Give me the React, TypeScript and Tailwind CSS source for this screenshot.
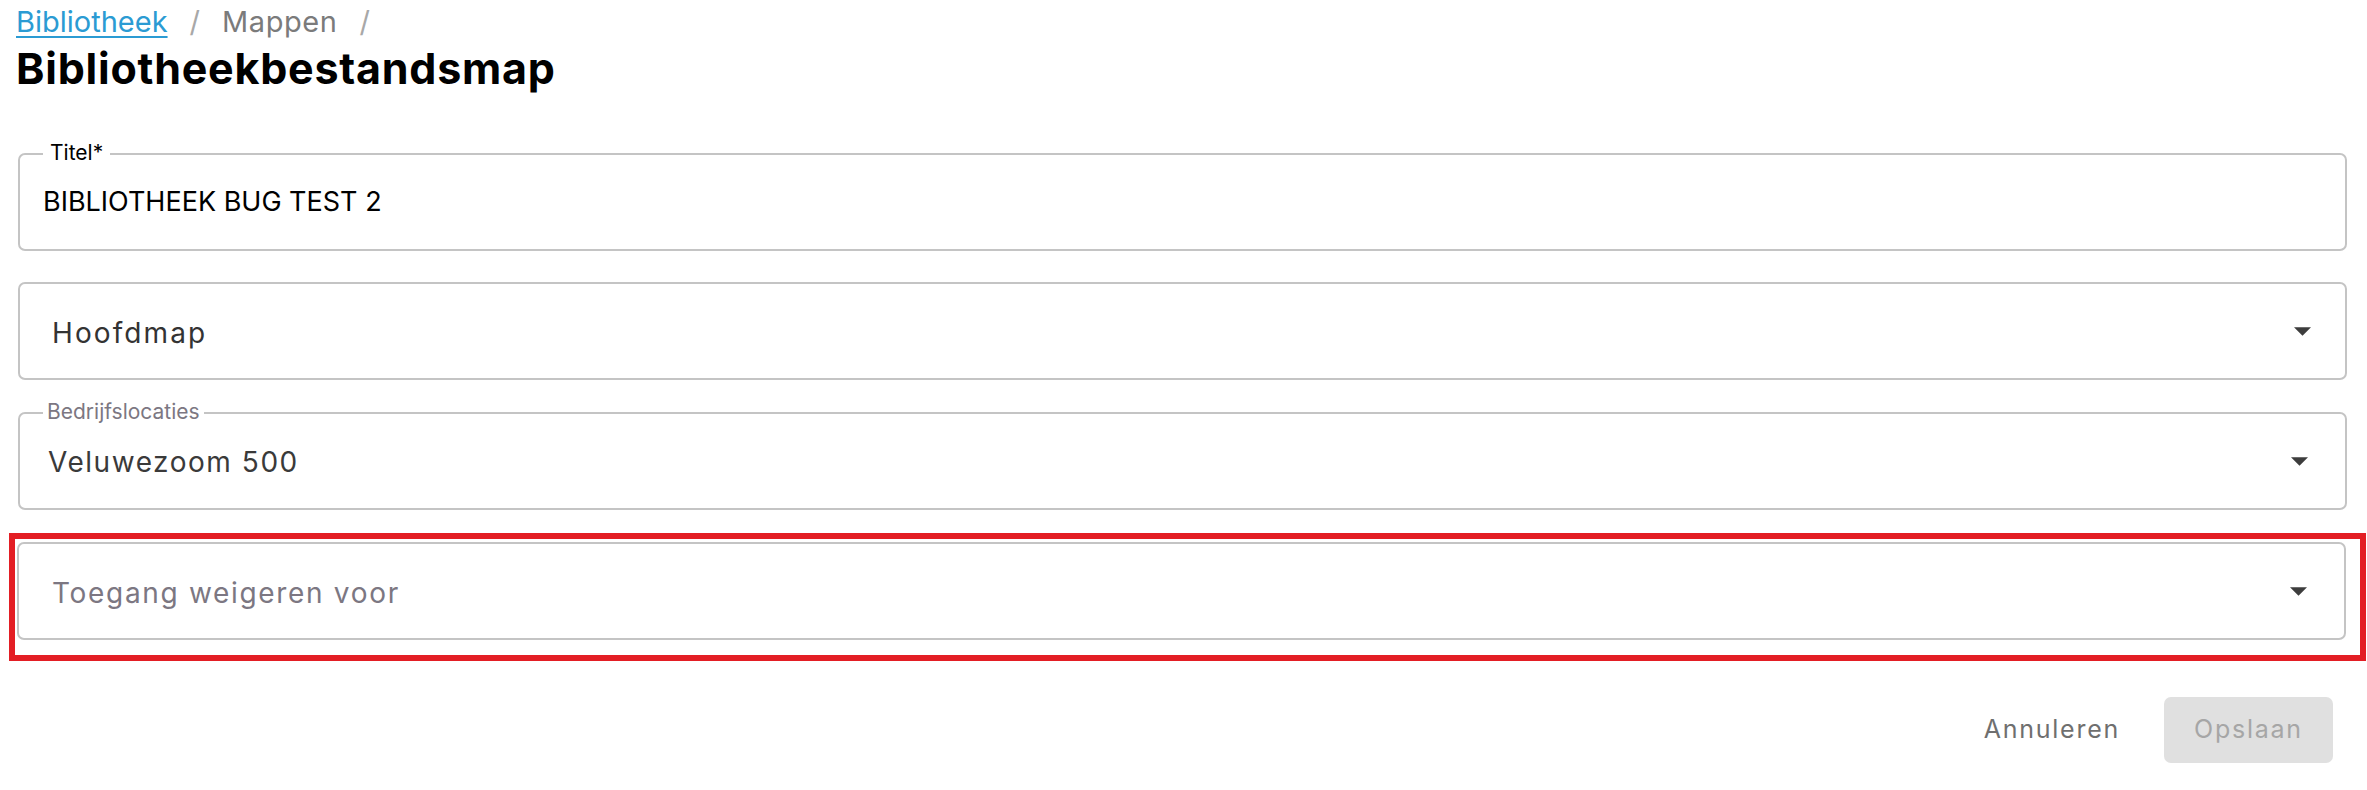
import { ReactNode } from 'react'

const font = { fontFamily: 'Inter, "Noto Sans", sans-serif' }

function Caret({ className = '' }: { className?: string }) {
  return (
    <svg viewBox="0 0 10 5" className={`h-[9px] w-[17px] fill-[#3d3d3d] ${className}`} aria-hidden="true">
      <path d="M0 0l5 5 5-5z" />
    </svg>
  )
}

function Field({
  label,
  labelClass = '',
  children,
  caret,
  textClass,
  caretClass,
}: {
  label?: string
  labelClass?: string
  children: ReactNode
  caret?: boolean
  textClass: string
  caretClass?: string
}) {
  return (
    <div className="relative flex h-[98px] items-center rounded-[7px] border-2 border-[#c4c4c4] bg-white">
      {label && (
        <span className={`absolute -top-[14px] left-[23px] bg-white text-[21px] leading-[24px] ${labelClass}`}>
          {label}
        </span>
      )}
      <span className={`flex-1 ${textClass}`}>{children}</span>
      {caret && <Caret className={caretClass} />}
    </div>
  )
}

export default function App() {
  return (
    <div className="min-h-screen bg-white pl-[16px] pr-[20px] text-black" style={font}>
      <nav className="flex h-[44px] items-center text-[29px] leading-[44px]" aria-label="breadcrumb">
        <a href="#" className="text-[#2b9bd3] underline decoration-[2px] underline-offset-[4px]">
          Bibliotheek
        </a>
        <span className="mx-[22px] text-[#a8a8a8]">/</span>
        <span className="tracking-[0.02em] text-[#7b7b7b]">Mappen</span>
        <span className="mx-[22px] text-[#a8a8a8]">/</span>
      </nav>

      <h1 className="text-[43px] font-bold leading-[48px] tracking-[0.018em]">Bibliotheekbestandsmap</h1>

      <div className="ml-[2px] mt-[61px] flex flex-col">
        <Field label="Titel*" labelClass="px-[7px] text-black" textClass="pl-[23px] text-[27px] text-black">
          BIBLIOTHEEK BUG TEST 2
        </Field>

        <div className="mt-[31px]">
          <Field
            caret
            textClass="pl-[32px] pt-[4px] text-[28px] tracking-[0.075em] text-[#333]"
            caretClass="mr-[34px]"
          >
            Hoofdmap
          </Field>
        </div>

        <div className="mt-[32px]">
          <Field
            label="Bedrijfslocaties"
            labelClass="px-[4px] text-[#7c7782]"
            caret
            textClass="pl-[28px] pt-[2px] text-[28px] tracking-[0.055em] text-[#3a3a3a]"
            caretClass="mr-[37px]"
          >
            Veluwezoom 500
          </Field>
        </div>

        <div className="-ml-[9px] -mr-[19px] mt-[23px] border-[6px] border-[#e31e24] pb-[15px] pl-[2px] pr-[14px] pt-[3px]">
          <Field
            caret
            textClass="pl-[33px] pt-[4px] text-[28px] tracking-[0.06em] text-[#7c7782]"
            caretClass="mr-[37px]"
          >
            Toegang weigeren voor
          </Field>
        </div>

        <div className="mt-[36px] flex justify-end gap-[14px] pr-[14px]">
          <button className="h-[66px] rounded-[7px] px-[30px] text-[25px] tracking-[0.07em] text-[#6f6f6f]">
            Annuleren
          </button>
          <button
            disabled
            className="h-[66px] w-[169px] rounded-[7px] bg-[#e0e0e0] text-[25px] tracking-[0.07em] text-[#a6a6a6]"
          >
            Opslaan
          </button>
        </div>
      </div>
    </div>
  )
}
